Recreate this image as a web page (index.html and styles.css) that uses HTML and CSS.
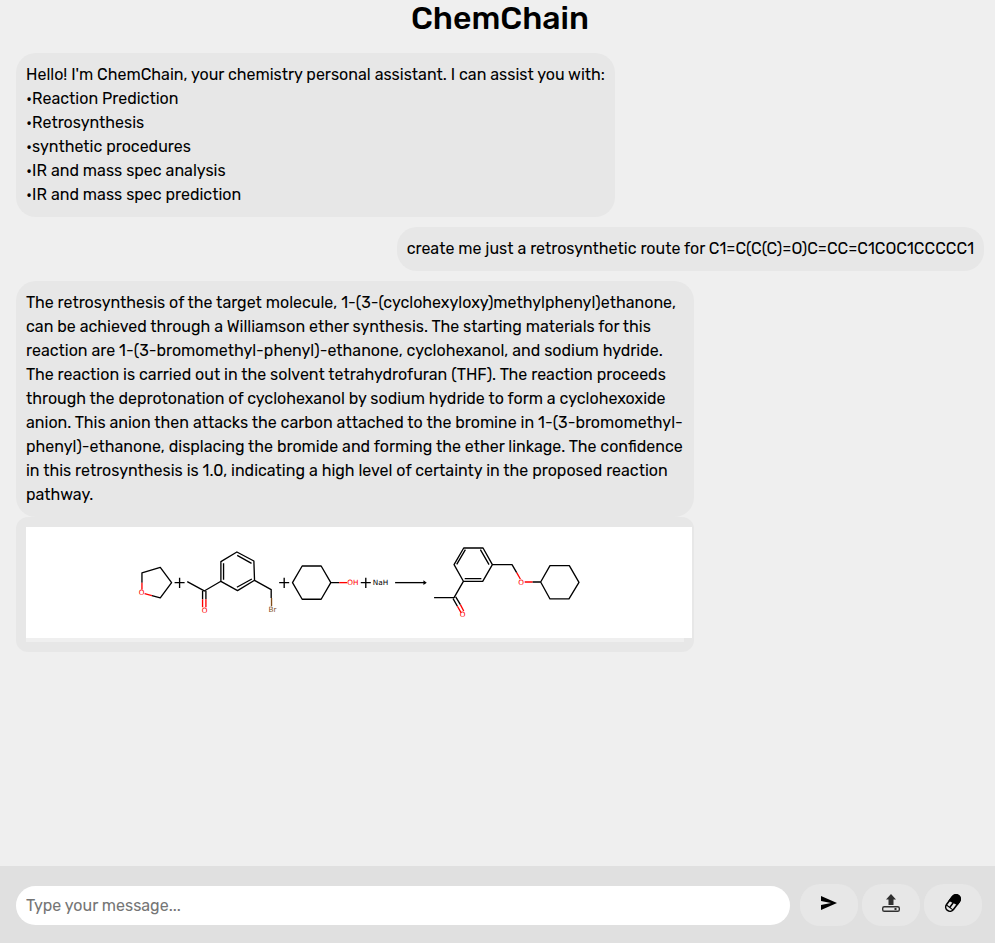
FILE: index.html
```html
<!DOCTYPE html>
<html lang="en">
<head>
<meta charset="utf-8">
<title>ChemChain</title>
<meta name="viewport" content="width=device-width, initial-scale=1">
<link rel="stylesheet" href="styles.css">
</head>
<body>
<h1 class="title">ChemChain</h1>
<main class="chat">
  <div class="message bot">Hello! I'm ChemChain, your chemistry personal assistant. I can assist you with:<br>•Reaction Prediction<br>•Retrosynthesis<br>•synthetic procedures<br>•IR and mass spec analysis<br>•IR and mass spec prediction</div>
  <div class="message user">create me just a retrosynthetic route for C1=C(C(C)=O)C=CC=C1COC1CCCCC1</div>
  <div class="message bot">The retrosynthesis of the target molecule, 1-(3-(cyclohexyloxy)methylphenyl)ethanone, can be achieved through a Williamson ether synthesis. The starting materials for this reaction are 1-(3-bromomethyl-phenyl)-ethanone, cyclohexanol, and sodium hydride. The reaction is carried out in the solvent tetrahydrofuran (THF). The reaction proceeds through the deprotonation of cyclohexanol by sodium hydride to form a cyclohexoxide anion. This anion then attacks the carbon attached to the bromine in 1-(3-bromomethyl-phenyl)-ethanone, displacing the bromide and forming the ether linkage. The confidence in this retrosynthesis is 1.0, indicating a high level of certainty in the proposed reaction pathway.</div>
  <div class="figure">
    <div class="figure-inner">
      <svg class="reaction" viewBox="0 0 1998 333" role="img" aria-label="Reaction scheme">
        <!-- tetrahydrofuran and 3-(bromomethyl)acetophenone -->
        <g transform="translate(298 25)">
          <path class="bond" d="M50 142V113L105 96L139 142L105 188L80 181"/>
          <path class="bond oxygen" d="M50 142V163M80 181L58 175"/>
          <text class="atom oxygen-label" x="49" y="179">O</text>
          <path class="plus" d="M148 142H178M163 127V158"/>
          <path class="bond" d="M186 139L237 167L287 138L337 166L388 135L386 77L335 50L287 79V138M295 84V133M336 60L379 84M335 156L380 131M388 135L438 163V188M232 167V192M242 167V192"/>
          <path class="bond oxygen" d="M232 192V216M242 192V216"/>
          <path class="bond bromine" d="M439 188V213"/>
          <text class="atom oxygen-label" x="238" y="234">O</text>
          <text class="atom bromine-label" x="442" y="230">Br</text>
        </g>
        <!-- cyclohexanol and sodium hydride -->
        <g transform="translate(733 25)">
          <path class="plus" d="M27 142H57M42 127V158M272 142H302M287 127V158"/>
          <path class="bond" d="M67 142L96 92H153L182 142L153 192H96ZM182 142H207"/>
          <path class="bond oxygen" d="M207 142H231"/>
          <text class="atom oxygen-label" x="248" y="150">OH</text>
          <text class="atom" x="331" y="150">NaH</text>
          <path class="bond" d="M375 142H466"/>
          <path d="M460 135L470 142L460 149Z"/>
        </g>
        <!-- product -->
        <g transform="translate(1198 25)">
          <path class="bond" d="M27 187H87L115 138L87 88L116 38H174L202 88L173 138H115M119 130H169M95 87L121 43M166 43L192 88M202 88H261L275 112M84 190L97 213M92 185L106 208"/>
          <path class="bond oxygen" d="M275 112L286 131M97 213L108 232M106 208L116 227M299 140H323"/>
          <path class="bond" d="M323 140H347L375 91H433L462 141L432 191H375L347 140"/>
          <text class="atom oxygen-label" x="288" y="148">O</text>
          <text class="atom oxygen-label" x="113" y="246">O</text>
        </g>
      </svg>
    </div>
  </div>
</main>
<form class="composer">
  <input class="entry" type="text" aria-label="Message" placeholder="Type your message...">
  <div class="actions">
    <button class="action" type="button" aria-label="Send">
      <svg class="icon" viewBox="0 0 24 24"><path d="M4 4L20 11L4 18V13L14 11L4 9Z"/></svg>
    </button>
    <button class="action" type="button" aria-label="Upload">
      <svg class="icon" viewBox="0 0 24 24"><path fill="#303030" d="M12 2L17 7.500H14.500V13H9.500V7.500H7Z"/><rect x="3.700" y="14.700" width="16.600" height="4.600" rx="1.600" fill="none" stroke="#303030" stroke-width="1.400"/><path fill="#303030" d="M15.500 16H17.500V18H15.500Z"/></svg>
    </button>
    <button class="action" type="button" aria-label="Molecule tools">
      <svg class="icon" viewBox="0 0 24 24"><g transform="rotate(37 12 11)"><rect x="7.700" y="1.800" width="8.600" height="18.400" rx="4.200" fill="none" stroke="#000" stroke-width="1.600"/><path d="M7 12V6A5 5 0 0 1 17 6V10ZM11.300 11H12.800V16H16V17H8V16H11.300Z"/></g></svg>
    </button>
  </div>
</form>
</body>
</html>
```
FILE: styles.css
```css
* { box-sizing: border-box; }
body {
  margin: 0;
  min-height: 100vh;
  display: flex;
  flex-direction: column;
  background: #efefef;
  color: #000;
  font-family: Rubik, Roboto, sans-serif;
  font-size: 16px;
  line-height: 24px;
}
.title {
  margin: 0;
  padding-left: 5px;
  font-size: 32px;
  line-height: 37px;
  font-weight: 500;
  text-align: center;
}
.chat {
  flex: 1;
  display: flex;
  flex-direction: column;
  align-items: flex-start;
  padding: 16px 11px 16px 16px;
}
.message {
  max-width: 70%;
  padding: 10px;
  border-radius: 20px;
  background: #e7e7e7;
}
.user {
  align-self: flex-end;
  margin: 10px 0;
}
.figure {
  width: 70%;
  padding: 10px;
  border-radius: 12px;
  background: #e7e7e7;
}
.figure-inner {
  padding-bottom: 4px;
  background: #efefef;
}
.reaction {
  display: block;
  width: calc(100% + 8px);
  background: #fff;
}
.bond, .plus {
  fill: none;
  stroke: #000;
  stroke-width: 4;
  stroke-linejoin: round;
}
.plus { stroke-width: 4; }
.oxygen { stroke: #f00; }
.bromine { stroke: #7f4c19; }
.atom {
  font-family: "DejaVu Sans", sans-serif;
  font-size: 22px;
  text-anchor: middle;
}
.oxygen-label { fill: #f00; }
.bromine-label { fill: #7f4c19; }
.composer {
  display: flex;
  align-items: center;
  gap: 10px;
  padding: 18px 13px 17px 16px;
  background: #e0e0e0;
}
.entry {
  flex: 1;
  min-width: 0;
  height: 39px;
  padding: 0 10px;
  border: 0;
  border-radius: 20px;
  background: #fff;
  font: inherit;
}
.entry::placeholder { color: #757575; }
.actions {
  display: flex;
  gap: 4px;
}
.action {
  width: 58px;
  height: 42px;
  padding: 0 0 2px;
  border: 0;
  border-radius: 20px;
  background: #e7e7e7;
  display: flex;
  align-items: center;
  justify-content: center;
}
.icon {
  width: 24px;
  height: 24px;
}
```
